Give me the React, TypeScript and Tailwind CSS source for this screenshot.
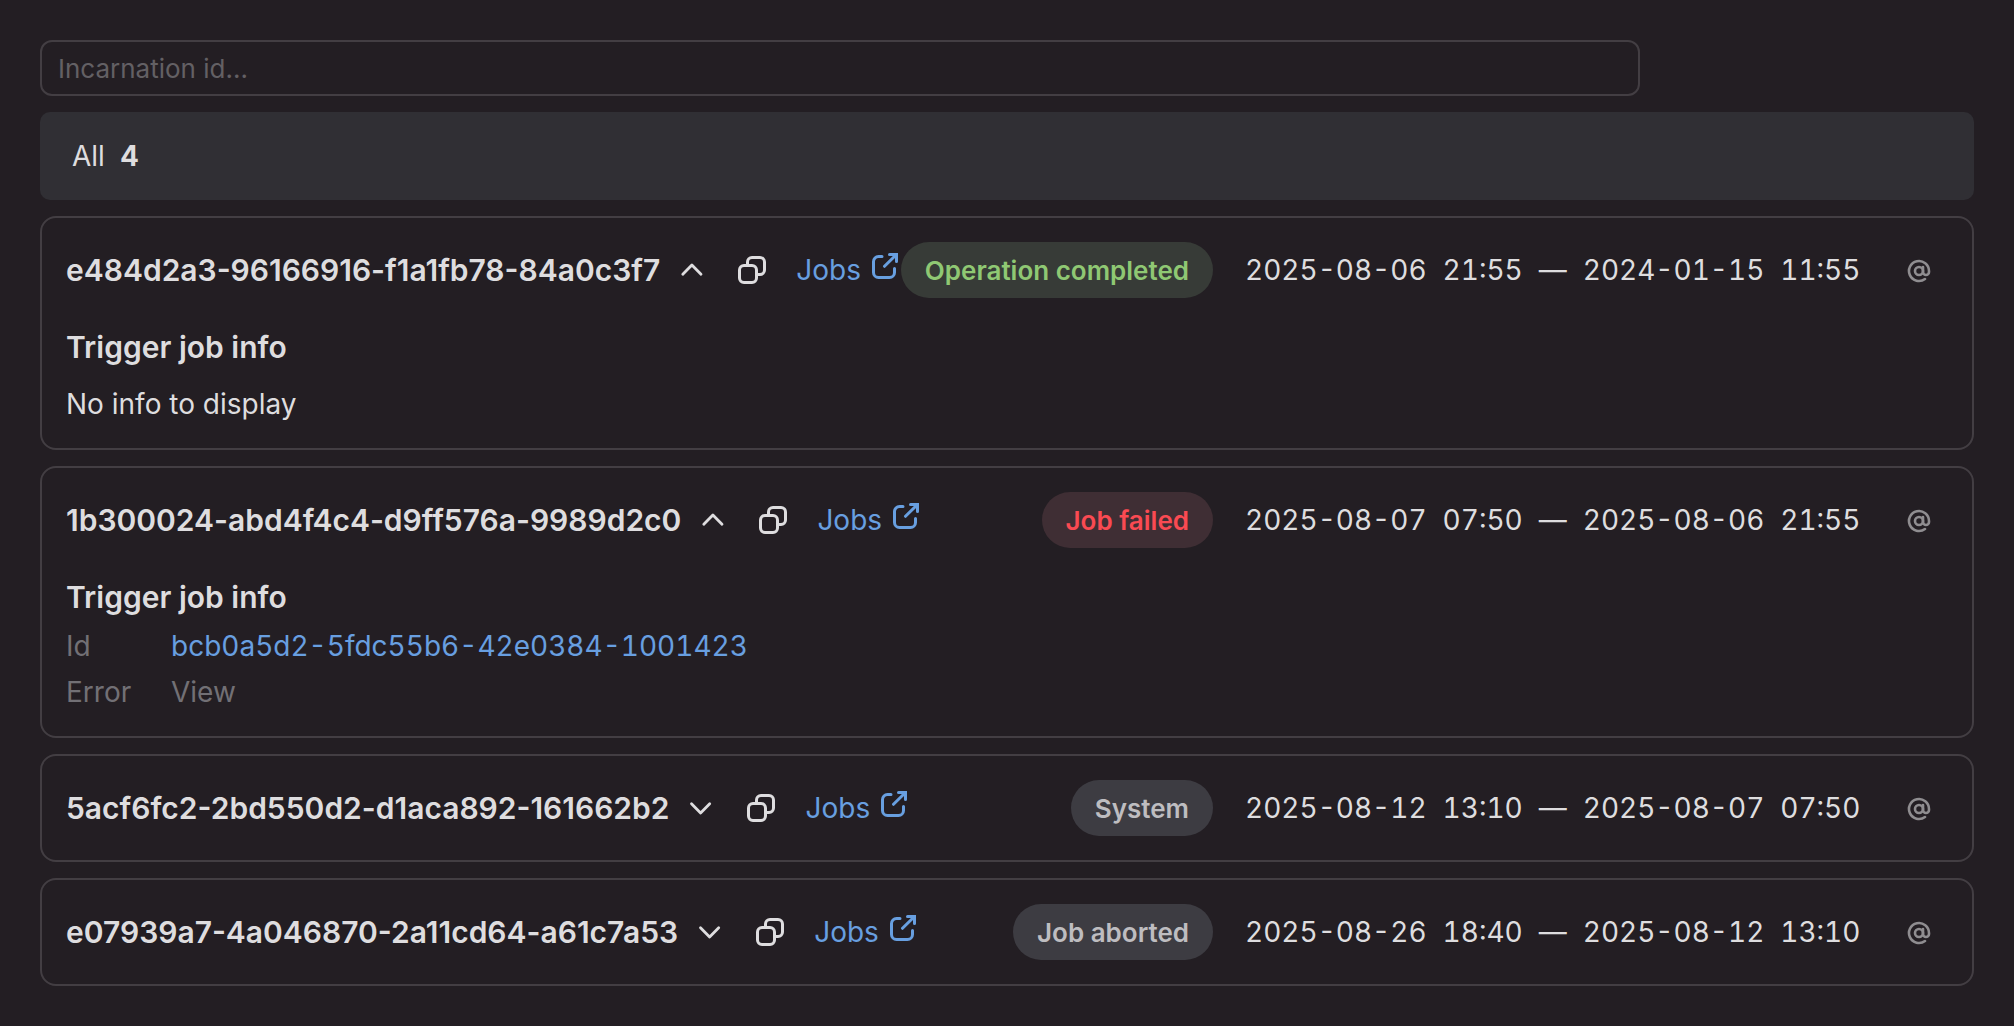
import React from "react";
import { AtSign } from "lucide-react";

type Tone = "success" | "danger" | "neutral";

interface Run {
  id: string;
  open: boolean;
  status: string;
  tone: Tone;
  from: [string, string];
  to: [string, string];
  body?: React.ReactNode;
}

const tones: Record<Tone, string> = {
  success: "bg-[#373b37] text-[#8fc873]",
  danger: "bg-[#3f2e34] text-[#fa4a52]",
  neutral: "bg-[#3d3c42] text-[#bebdc0]",
};

function Chevron({ open }: { open: boolean }) {
  return (
    <svg width="32" height="32" viewBox="0 0 32 32" fill="none" stroke="currentColor" strokeWidth="2.8" strokeLinecap="round" strokeLinejoin="round">
      <path d={open ? "M6.800 20.200L15.900 11L25 20.200" : "M6.500 11.800L15.600 21L24.700 11.800"} />
    </svg>
  );
}

function CopyIcon() {
  return (
    <svg width="28" height="28" viewBox="0 0 28 28" fill="none" stroke="currentColor" strokeWidth="3">
      <rect x="1.5" y="9.5" width="17" height="17" rx="4.5" />
      <path d="M9.500 9V6A4.500 4.500 0 0 1 14 1.500H22A4.500 4.500 0 0 1 26.500 6V14A4.500 4.500 0 0 1 22 18.500H19" />
    </svg>
  );
}

function ExternalIcon() {
  return (
    <svg width="26" height="26" viewBox="0 0 26 26" fill="none" stroke="currentColor" strokeWidth="3" strokeLinecap="round">
      <path d="M10 3.500H6.500A5 5 0 0 0 1.500 8.500V19.500A5 5 0 0 0 6.500 24.500H17.500A5 5 0 0 0 22.500 19.500V15.500" />
      <path d="M12.500 13.300L24 2" />
      <path d="M17.500 1.500H24.500V8.500" />
    </svg>
  );
}

const runs: Run[] = [
  {
    id: "e484d2a3-96166916-f1a1fb78-84a0c3f7",
    open: true,
    status: "Operation completed",
    tone: "success",
    from: ["2025-08-06", "21:55"],
    to: ["2024-01-15", "11:55"],
    body: <p className="mt-[19px] h-9 leading-9">No info to display</p>,
  },
  {
    id: "1b300024-abd4f4c4-d9ff576a-9989d2c0",
    open: true,
    status: "Job failed",
    tone: "danger",
    from: ["2025-08-07", "07:50"],
    to: ["2025-08-06", "21:55"],
    body: (
      <dl className="mt-[11px] grid grid-cols-[105px_1fr] gap-y-2.5 leading-9 text-[#727075]">
        <dt>Id</dt>
        <dd className="tabular-nums text-[#689fe0]">bcb0a5d2-5fdc55b6-42e0384-1001423</dd>
        <dt>Error</dt>
        <dd>View</dd>
      </dl>
    ),
  },
  {
    id: "5acf6fc2-2bd550d2-d1aca892-161662b2",
    open: false,
    status: "System",
    tone: "neutral",
    from: ["2025-08-12", "13:10"],
    to: ["2025-08-07", "07:50"],
  },
  {
    id: "e07939a7-4a046870-2a11cd64-a61c7a53",
    open: false,
    status: "Job aborted",
    tone: "neutral",
    from: ["2025-08-26", "18:40"],
    to: ["2025-08-12", "13:10"],
  },
];

function RunCard({ run }: { run: Run }) {
  return (
    <section className={`rounded-2xl border-2 border-[#433e43] px-6 pt-6 ${run.body ? "pb-[26px]" : "pb-6"}`}>
      <div className="flex h-14 items-center whitespace-nowrap">
        <h2 className="text-[30px] font-semibold leading-10">{run.id}</h2>
        <button className="ml-4"><Chevron open={run.open} /></button>
        <button className="ml-[30px]"><CopyIcon /></button>
        <a className="ml-[30px] flex items-center text-[#689fe0]">
          <span>Jobs</span>
          <span className="mb-2 ml-[11px] mr-[-1px]"><ExternalIcon /></span>
        </a>
        <span className={`ml-auto flex h-14 items-center rounded-full px-6 text-[26px] font-semibold ${tones[run.tone]}`}>
          {run.status}
        </span>
        <span className="ml-8 flex w-[616px] gap-4 tabular-nums">
          <span>{run.from[0]}</span>
          <span>{run.from[1]}</span>
          <span>—</span>
          <span>{run.to[0]}</span>
          <span>{run.to[1]}</span>
        </span>
        <AtSign size={24} strokeWidth={2.6} className="ml-[46px] mr-[17px] mt-0.5 shrink-0 text-[#8f8d90]" />
      </div>
      {run.body && (
        <div>
          <h3 className="mt-[29px] text-[30px] font-semibold leading-10">Trigger job info</h3>
          {run.body}
        </div>
      )}
    </section>
  );
}

export default function App() {
  return (
    <main className="flex min-h-screen flex-col gap-4 bg-[#231e23] p-10 font-['Inter',sans-serif] text-[28px] text-[#dedddf]">
      <input
        placeholder="Incarnation id..."
        className="h-14 w-[1600px] rounded-xl border-2 border-[#433e43] bg-transparent px-4 text-[26px] outline-none placeholder:text-[#636064]"
      />
      <div className="flex h-22 items-center gap-[15px] rounded-[10px] bg-[#302f34] px-8">
        <span>All</span>
        <span className="font-bold">4</span>
      </div>
      {runs.map((run) => (
        <RunCard key={run.id} run={run} />
      ))}
    </main>
  );
}
